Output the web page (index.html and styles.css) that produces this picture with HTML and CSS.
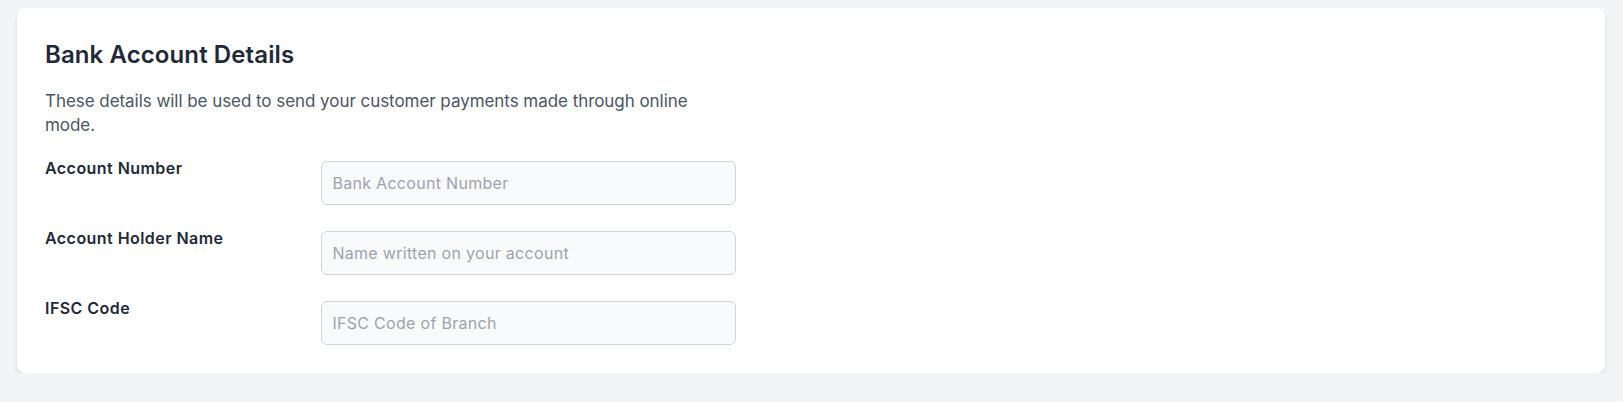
FILE: index.html
```html
<!DOCTYPE html>
<html lang="en">
<head>
<meta charset="utf-8">
<title>Bank Account Details</title>
<link rel="stylesheet" href="styles.css">
</head>
<body>
<div class="page">
  <section class="card">
    <h2 class="title">Bank Account Details</h2>
    <div class="content">
      <p class="desc">These details will be used to send your customer payments made through online mode.</p>
      <div class="form">
        <div class="row">
          <label class="label" for="acc">Account Number</label>
          <input class="input" id="acc" type="text" placeholder="Bank Account Number">
        </div>
        <div class="row">
          <label class="label" for="holder">Account Holder Name</label>
          <input class="input" id="holder" type="text" placeholder="Name written on your account">
        </div>
        <div class="row">
          <label class="label" for="ifsc">IFSC Code</label>
          <input class="input" id="ifsc" type="text" placeholder="IFSC Code of Branch">
        </div>
      </div>
    </div>
  </section>
</div>
</body>
</html>
```

FILE: styles.css
```css
* { box-sizing: border-box; }
html, body { margin: 0; padding: 0; }
body {
  background: #f3f4f6;
  font-family: Inter, "Noto Sans", "Liberation Sans", sans-serif;
  color: #1f2937;
}
.page {
  padding: 8px 18px 0 17px;
}
.card {
  background: #ffffff;
  border-radius: 8px;
  box-shadow: 0 4px 6px -1px rgba(0,0,0,0.1), 0 2px 4px -1px rgba(0,0,0,0.06);
  padding: 32px 28px 28px 28px;
  height: 365px;
}
.title {
  margin: 0;
  font-size: 24px;
  line-height: 30px;
  font-weight: 600;
  letter-spacing: 0.1px;
  color: #1f2937;
}
.content {
  width: 691px;
}
.desc {
  margin: 19px 0 0 0;
  font-size: 17px;
  line-height: 24px;
  letter-spacing: -0.05px;
  color: #4b5563;
}
.form {
  margin-top: 19px;
  display: flex;
  flex-direction: column;
  gap: 21px;
}
.row {
  display: grid;
  grid-template-columns: 2fr 3fr;
}
.label {
  font-size: 16px;
  line-height: 24px;
  font-weight: 600;
  letter-spacing: 0.45px;
  color: #1f2937;
}
.input {
  margin-top: 5px;
  height: 44px;
  width: 100%;
  border: 1px solid #d1d5db;
  border-radius: 6px;
  background: #f9fafb;
  padding: 0 10px;
  font-family: inherit;
  font-size: 16px;
  letter-spacing: 0.3px;
  color: #1f2937;
  outline: none;
}
.input::placeholder {
  color: #9ca3af;
}
```
